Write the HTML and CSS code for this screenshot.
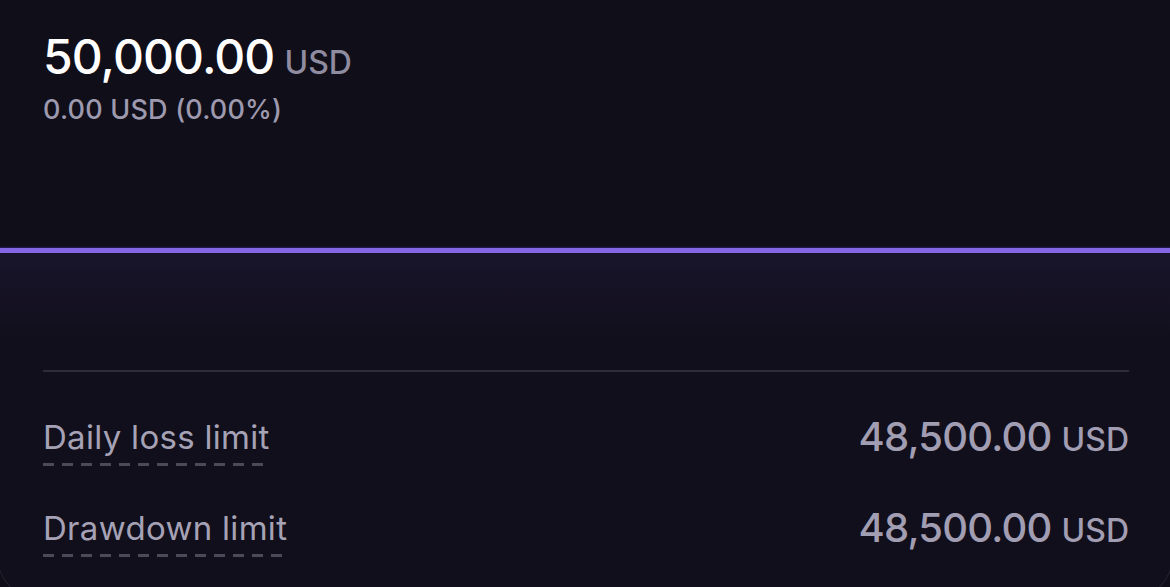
FILE: index.html
```html
<!DOCTYPE html>
<html lang="en">
<head>
<meta charset="utf-8">
<title>Account balance</title>
<link rel="stylesheet" href="styles.css">
</head>
<body>
<div class="panel">
  <header class="summary">
    <div class="balance"><span class="amount">50,000.00</span><span class="unit">USD</span></div>
    <div class="change">0.00 USD (0.00%)</div>
  </header>
  <div class="chart">
    <div class="line"></div>
    <div class="fill"></div>
  </div>
  <section class="limits">
    <div class="divider"></div>
    <div class="row">
      <span class="label">Daily loss limit</span>
      <span class="value"><span class="num">48,500.00</span><span class="cur">USD</span></span>
    </div>
    <div class="row">
      <span class="label">Drawdown limit</span>
      <span class="value"><span class="num">48,500.00</span><span class="cur">USD</span></span>
    </div>
  </section>
</div>
</body>
</html>
```

FILE: styles.css
```css
html, body {
  margin: 0;
  padding: 0;
  background: #0f0d17;
  overflow: hidden;
  height: 100%;
}
body {
  font-family: Inter, "Liberation Sans", sans-serif;
  -webkit-font-smoothing: antialiased;
}
.panel {
  margin: 0 -3px;
  height: 600px;
  border: 1px solid #2c2937;
  border-top: none;
  border-radius: 0 0 44px 44px;
  background: #100e19;
  box-sizing: border-box;
  display: flex;
  flex-direction: column;
  overflow: hidden;
}
.summary {
  padding: 28px 45px 0;
}
.balance {
  display: flex;
  align-items: baseline;
  gap: 10px;
}
.amount {
  font-size: 48px;
  line-height: 58px;
  font-weight: 500;
  color: #ffffff;
  letter-spacing: -0.9px;
}
.unit {
  font-size: 32px;
  font-weight: 500;
  color: #8f8ba0;
}
.change {
  margin-top: 8px;
  font-size: 27px;
  line-height: 32px;
  font-weight: 500;
  color: #9d99ae;
  letter-spacing: 0.2px;
}
.chart {
  margin-top: 122px;
}
.line {
  height: 5px;
  background: #8466e6;
  box-shadow: 0 0 2px 1px #2a1e5a;
}
.fill {
  height: 90px;
  background: linear-gradient(#18142a, #120f1c);
}
.limits {
  padding: 0 43px 0 45px;
  flex: 1;
  background: #110f1b;
}
.divider {
  height: 2px;
  background: #2f2c39;
  margin-top: 27px;
}
.row {
  display: flex;
  justify-content: space-between;
  align-items: flex-start;
  height: 91px;
  padding-top: 45px;
  box-sizing: border-box;
}
.label {
  font-size: 33px;
  line-height: 40px;
  font-weight: 400;
  color: #a6a2b6;
  letter-spacing: 0.3px;
  padding-bottom: 9px;
  background: repeating-linear-gradient(90deg, #4c4958 0 11px, transparent 11px 19px) left bottom / 100% 3px no-repeat;
}
.value {
  display: flex;
  align-items: baseline;
  gap: 10px;
  margin-top: -4px;
  line-height: 48px;
  color: #a19db2;
  font-weight: 500;
}
.num {
  font-size: 40px;
  letter-spacing: -0.8px;
}
.cur {
  font-size: 32px;
}
```
